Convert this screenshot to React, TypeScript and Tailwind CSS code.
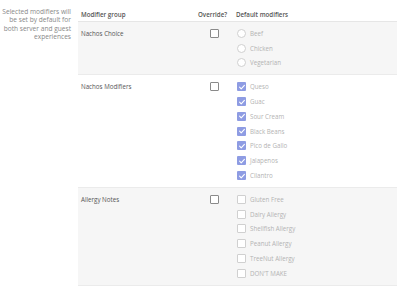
import React from "react";

type Group = {
    name: string;
    kind: "radio" | "check";
    options: { label: string; checked?: boolean }[];
    shaded: boolean;
};

const groups: Group[] = [
    {
        name: "Nachos Choice",
        kind: "radio",
        shaded: true,
        options: [{ label: "Beef" }, { label: "Chicken" }, { label: "Vegetarian" }],
    },
    {
        name: "Nachos Modifiers",
        kind: "check",
        shaded: false,
        options: [
            { label: "Queso", checked: true },
            { label: "Guac", checked: true },
            { label: "Sour Cream", checked: true },
            { label: "Black Beans", checked: true },
            { label: "Pico de Gallo", checked: true },
            { label: "Jalapenos", checked: true },
            { label: "Cilantro", checked: true },
        ],
    },
    {
        name: "Allergy Notes",
        kind: "check",
        shaded: true,
        options: [
            { label: "Gluten Free" },
            { label: "Dairy Allergy" },
            { label: "Shellfish Allergy" },
            { label: "Peanut Allergy" },
            { label: "TreeNut Allergy" },
            { label: "DON'T MAKE" },
        ],
    },
];

const CheckMark = () => (
    <svg width="8" height="8" viewBox="0 0 8 8" fill="none">
        <path d="M1.6 4.2 L3.2 5.8 L6.4 2.4" stroke="white" strokeWidth="1.1" strokeLinecap="round" strokeLinejoin="round" />
    </svg>
);

const OptionBox = ({ kind, checked }: { kind: "radio" | "check"; checked?: boolean }) => {
    if (kind === "radio") {
        return <span className="w-[9px] h-[9px] rounded-full border border-[#d0d0d0] bg-white shrink-0" />;
    }
    if (checked) {
        return (
            <span className="w-[9px] h-[9px] rounded-[1px] bg-[#8e9ce3] flex items-center justify-center shrink-0">
                <CheckMark />
            </span>
        );
    }
    return <span className="w-[9px] h-[9px] rounded-[1px] border border-[#d0d0d0] bg-white shrink-0" />;
};

export default function App() {
    return (
        <div
            className="w-[400px] h-[291px] bg-white flex pt-[8px] overflow-hidden"
            style={{ fontFamily: "'Open Sans', sans-serif" }}
        >
            {/* Description */}
            <div className="w-[71px] shrink-0 text-right text-[6.6px] leading-[8.4px] text-[#888]">
                Selected modifiers will be set by default for both server and guest experiences
            </div>

            {/* Table */}
            <div className="ml-[7px] w-[319px]">
                <div className="flex h-[14px] items-center border-b border-[#e6e6e6] text-[6.2px] font-semibold text-[#555]">
                    <div className="w-[117px] pl-[3px]">Modifier group</div>
                    <div className="w-[41px] pl-[3px]">Override?</div>
                    <div>Default modifiers</div>
                </div>

                {groups.map((group) => (
                    <div
                        key={group.name}
                        className={`flex border-b border-[#ebebeb] py-[4px] ${group.shaded ? "bg-[#f6f6f6]" : "bg-white"}`}
                    >
                        <div className="w-[117px] pl-[3px] h-[14.8px] flex items-center text-[6.2px] text-[#555]">
                            {group.name}
                        </div>
                        <div className="w-[41px] h-[14.8px] flex items-center pl-[15px]">
                            <span className="w-[9px] h-[9px] rounded-[1px] border border-[#8a8a8a] bg-white" />
                        </div>
                        <div className="flex flex-col pl-[1px]">
                            {group.options.map((opt) => (
                                <div key={opt.label} className="h-[14.8px] flex items-center gap-[4px]">
                                    <OptionBox kind={group.kind} checked={opt.checked} />
                                    <span className="text-[6.2px] text-[#b3b3b3]">{opt.label}</span>
                                </div>
                            ))}
                        </div>
                    </div>
                ))}
            </div>
        </div>
    );
}
